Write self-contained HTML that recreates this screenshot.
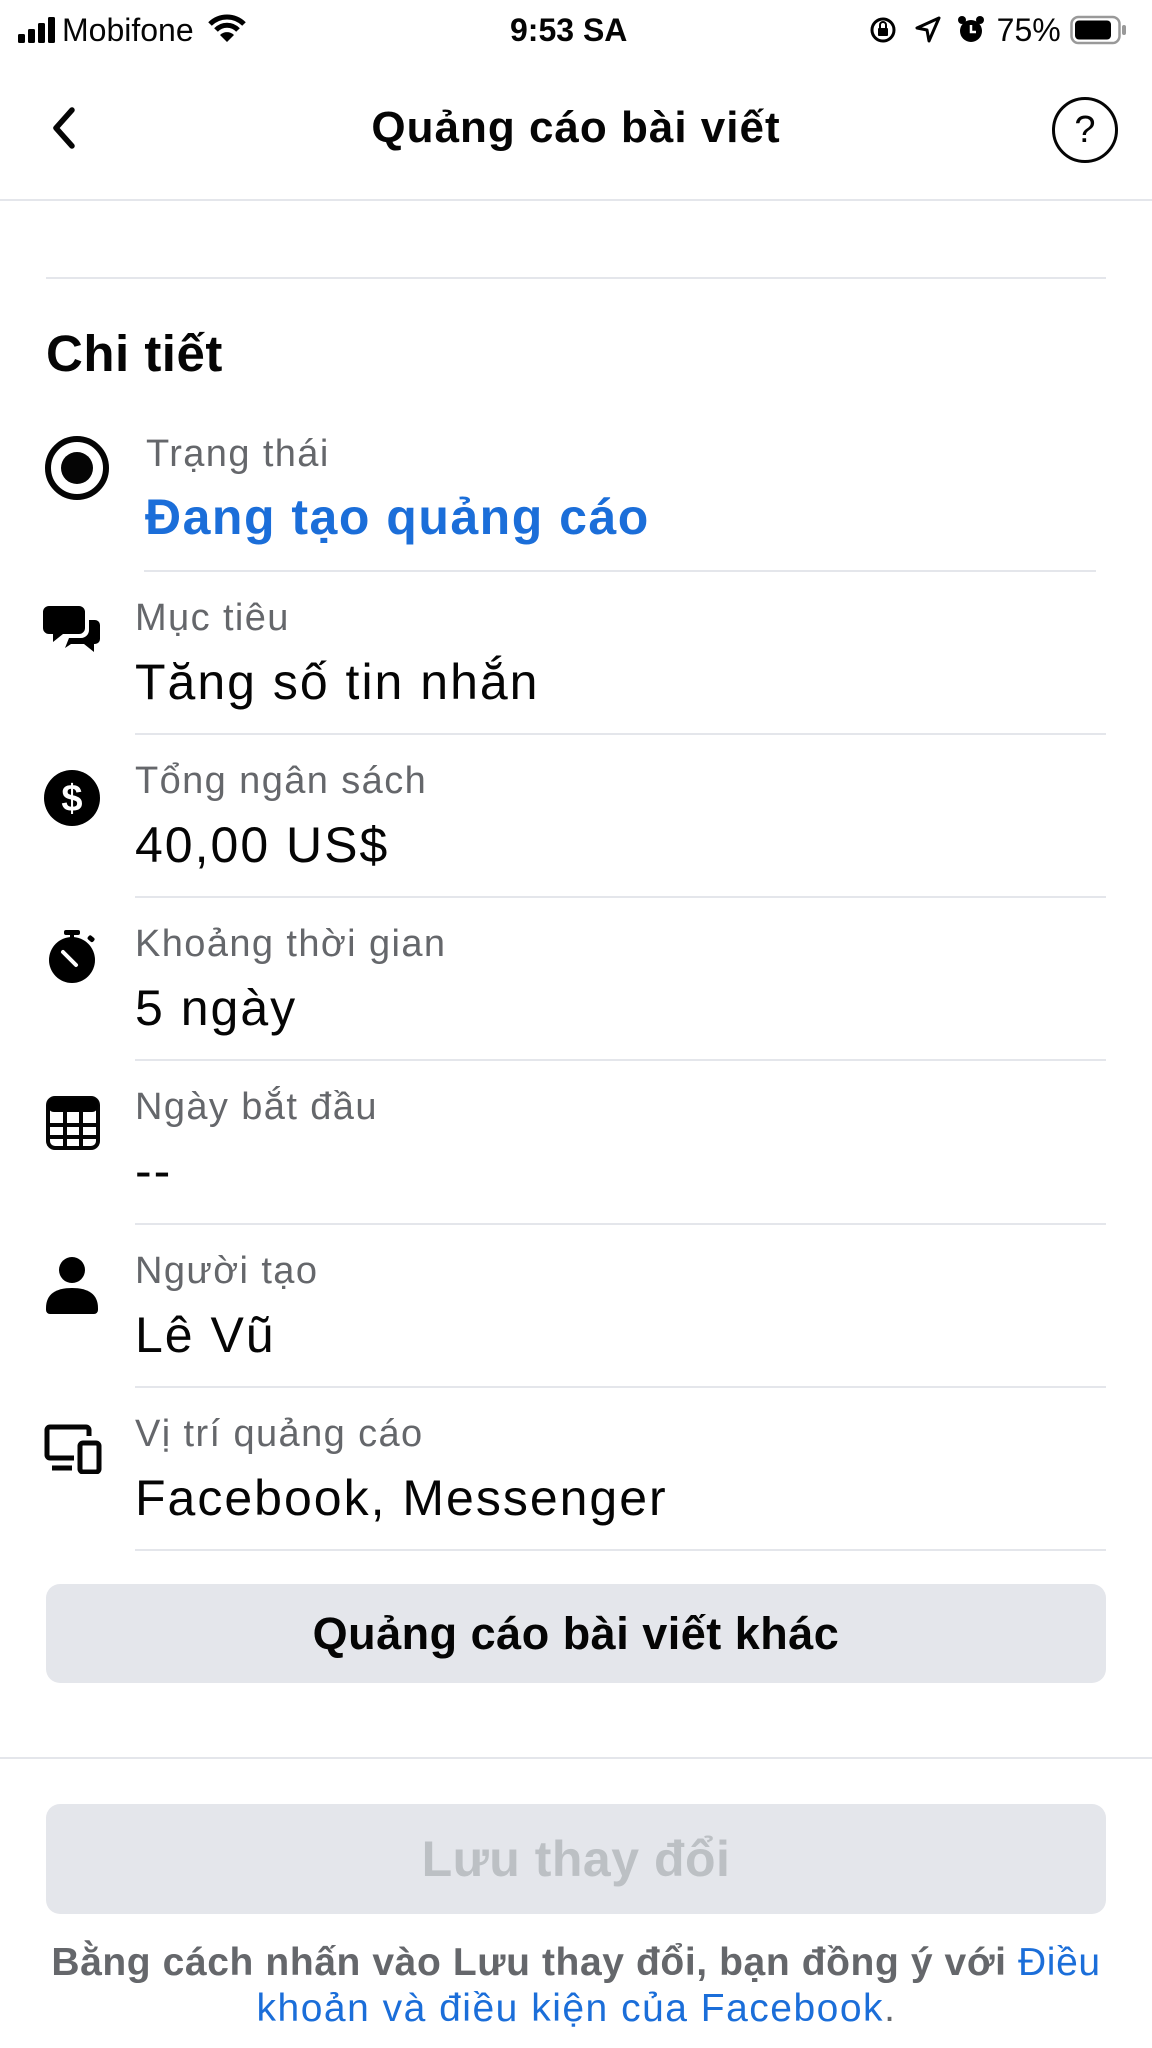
<!DOCTYPE html>
<html><head><meta charset="utf-8">
<style>
*{margin:0;padding:0;box-sizing:border-box}
body{width:1152px;height:2048px;background:#fff;position:relative;overflow:hidden;font-family:"Liberation Sans",sans-serif;color:#050505}
.a{position:absolute;white-space:nowrap}
.lbl{font-size:38px;line-height:40px;color:#65676b;left:135px;letter-spacing:1.4px}
.val{font-size:50px;line-height:52px;color:#050505;left:135px;letter-spacing:2px}
.sep{position:absolute;left:135px;right:46px;height:2px;background:#e4e6eb}
.ic{position:absolute}
</style></head><body>
<!-- status bar -->
<div class="a" style="left:18px;top:12px;font-size:32px;line-height:36px">
<svg width="50" height="26" style="vertical-align:-2px"><rect x="0" y="17" width="7" height="9" rx="1.5"/><rect x="10" y="12" width="7" height="14" rx="1.5"/><rect x="20" y="6" width="7" height="20" rx="1.5"/><rect x="30" y="0" width="7" height="26" rx="1.5"/></svg><span style="margin-left:-6px">Mobifone</span>
<svg width="40" height="30" viewBox="0 0 40 30" style="vertical-align:-3px;margin-left:4px"><path d="M3 10 A24 24 0 0 1 37 10" stroke="#000" stroke-width="5" fill="none"/><path d="M9 16 A15 15 0 0 1 31 16" stroke="#000" stroke-width="5" fill="none"/><path d="M20 28 L13 21 A10 10 0 0 1 27 21 Z"/></svg>
</div>
<div class="a" style="left:510px;top:12px;font-size:32px;line-height:36px;font-weight:bold">9:53 SA</div>
<div class="a" style="left:868px;top:12px;font-size:32px;line-height:36px">
<svg width="30" height="30" viewBox="0 0 30 30" style="vertical-align:-4px"><circle cx="15" cy="15" r="11" stroke="#000" stroke-width="3" fill="none"/><rect x="10" y="13" width="10" height="8" rx="1"/><path d="M12 13v-3a3 3 0 0 1 6 0v3" stroke="#000" stroke-width="2" fill="none"/></svg>
<svg width="30" height="30" viewBox="0 0 30 30" style="vertical-align:-4px;margin-left:6px"><path d="M26 3 L4 13 L14 15 L16 26 Z" stroke="#000" stroke-width="3" fill="none" stroke-linejoin="round"/></svg>
<svg width="30" height="30" viewBox="0 0 30 30" style="vertical-align:-4px;margin-left:4px"><circle cx="15" cy="16" r="11"/><circle cx="6" cy="5" r="4"/><circle cx="24" cy="5" r="4"/><path d="M15 10v7h5" stroke="#fff" stroke-width="2.5" fill="none"/></svg>
<span style="margin-left:2px">75%</span>
<svg width="58" height="32" viewBox="0 0 58 32" style="vertical-align:-5px"><rect x="1.5" y="3" width="48" height="26" rx="7" stroke="#999" stroke-width="2.5" fill="none"/><rect x="5" y="6.5" width="36" height="19" rx="4"/><rect x="52" y="11" width="4" height="10" rx="2" fill="#999"/></svg>
</div>
<!-- nav -->
<svg class="ic" style="left:48px;top:106px" width="32" height="44" viewBox="0 0 32 44"><path d="M24 4 L8 22 L24 40" stroke="#050505" stroke-width="5.5" fill="none" stroke-linecap="round" stroke-linejoin="round"/></svg>
<div class="a" style="left:0;width:1152px;text-align:center;top:104px;font-size:44px;line-height:48px;font-weight:bold;letter-spacing:1px">Quảng cáo bài viết</div>
<div class="a" style="left:1052px;top:97px;width:66px;height:66px;border:3px solid #050505;border-radius:50%;text-align:center;font-size:38px;line-height:60px">?</div>
<div class="a" style="left:0;right:0;top:199px;height:2px;background:#e4e6eb"></div>
<div class="a" style="left:46px;right:46px;top:277px;height:2px;background:#e4e6eb"></div>
<div class="a" style="left:46px;top:327px;font-size:51px;line-height:54px;font-weight:bold;letter-spacing:0.5px">Chi tiết</div>
<!-- row 1 -->
<svg class="ic" style="left:44px;top:435px" width="66" height="66"><circle cx="33" cy="33" r="29" stroke="#050505" stroke-width="6" fill="none"/><circle cx="33" cy="33" r="16" fill="#050505"/></svg>
<div class="a lbl" style="left:146px;top:434px">Trạng thái</div>
<div class="a" style="left:145px;top:491px;font-size:50px;line-height:52px;font-weight:bold;color:#1b6ed9;letter-spacing:1.5px">Đang tạo quảng cáo</div>
<div class="sep" style="top:570px;left:144px;right:56px"></div>
<!-- row 2 -->
<svg class="ic" style="left:43px;top:604px" width="58" height="56" viewBox="0 0 58 56"><path d="M6 2h30a6 6 0 0 1 6 6v16a6 6 0 0 1-6 6H20l-10 8v-8H6a6 6 0 0 1-6-6V8a6 6 0 0 1 6-6z"/><path d="M46 16h6a5 5 0 0 1 5 5v14a5 5 0 0 1-5 5h-1v8l-10-8H28l-6 4 4-10h12a8 8 0 0 0 8-8z"/></svg>
<div class="a lbl" style="top:598px">Mục tiêu</div>
<div class="a val" style="top:656px">Tăng số tin nhắn</div>
<div class="sep" style="top:733px"></div>
<!-- row 3 -->
<svg class="ic" style="left:44px;top:770px" width="56" height="56" viewBox="0 0 56 56"><circle cx="28" cy="28" r="28"/><text x="28" y="41" text-anchor="middle" font-family="Liberation Sans" font-weight="bold" font-size="38" fill="#fff">$</text></svg>
<div class="a lbl" style="top:761px">Tổng ngân sách</div>
<div class="a val" style="top:819px">40,00 US$</div>
<div class="sep" style="top:896px"></div>
<!-- row 4 -->
<svg class="ic" style="left:46px;top:928px" width="54" height="56" viewBox="0 0 54 56"><circle cx="26" cy="32" r="23"/><rect x="18" y="2" width="16" height="5" rx="2"/><rect x="24" y="5" width="4" height="6"/><rect x="42" y="8" width="7" height="5" rx="2" transform="rotate(40 45 10)"/><path d="M17 24 L30 37" stroke="#fff" stroke-width="4" stroke-linecap="round"/></svg>
<div class="a lbl" style="top:924px">Khoảng thời gian</div>
<div class="a val" style="top:982px">5 ngày</div>
<div class="sep" style="top:1059px"></div>
<!-- row 5 -->
<svg class="ic" style="left:46px;top:1096px" width="54" height="54" viewBox="0 0 54 54"><rect x="2" y="2" width="50" height="50" rx="7" stroke="#050505" stroke-width="4" fill="none"/><rect x="2" y="2" width="50" height="14" rx="6"/><path d="M2 29h50M2 41h50M19 14v38M35 14v38" stroke="#050505" stroke-width="4"/></svg>
<div class="a lbl" style="top:1087px">Ngày bắt đầu</div>
<div class="a val" style="top:1145px">--</div>
<div class="sep" style="top:1223px"></div>
<!-- row 6 -->
<svg class="ic" style="left:46px;top:1256px" width="52" height="58" viewBox="0 0 52 58"><circle cx="26" cy="14" r="13"/><path d="M0 52c0-14 10-20 26-20s26 6 26 20v2a4 4 0 0 1-4 4H4a4 4 0 0 1-4-4z"/></svg>
<div class="a lbl" style="top:1251px">Người tạo</div>
<div class="a val" style="top:1309px">Lê Vũ</div>
<div class="sep" style="top:1386px"></div>
<!-- row 7 -->
<svg class="ic" style="left:44px;top:1424px" width="58" height="50" viewBox="0 0 58 50"><path d="M30 34H6a3 3 0 0 1-3-3V6a3 3 0 0 1 3-3h36a3 3 0 0 1 3 3v6" stroke="#050505" stroke-width="5" fill="none"/><path d="M8 44h20" stroke="#050505" stroke-width="5"/><rect x="36" y="19" width="19" height="29" rx="3" stroke="#050505" stroke-width="5" fill="none"/></svg>
<div class="a lbl" style="top:1414px">Vị trí quảng cáo</div>
<div class="a val" style="top:1472px">Facebook, Messenger</div>
<div class="sep" style="top:1549px"></div>
<!-- buttons -->
<div class="a" style="left:46px;width:1060px;top:1584px;height:99px;background:#e4e6eb;border-radius:14px;text-align:center;font-size:45px;line-height:99px;font-weight:bold;letter-spacing:0.5px">Quảng cáo bài viết khác</div>
<div class="a" style="left:0;right:0;top:1757px;height:2px;background:#e4e6eb"></div>
<div class="a" style="left:46px;width:1060px;top:1804px;height:110px;background:#e4e6eb;border-radius:14px;text-align:center;font-size:50px;line-height:110px;font-weight:bold;color:#bcc0c4;letter-spacing:0.5px">Lưu thay đổi</div>
<div class="a" style="left:0;width:1152px;top:1940px;text-align:center;font-size:39px;line-height:46px;color:#65676b;font-weight:bold;letter-spacing:0.6px">Bằng cách nhấn vào Lưu thay đổi, bạn đồng ý với <span style="color:#1b6ed9;font-weight:normal">Điều</span><br><span style="color:#1b6ed9;font-weight:normal;letter-spacing:1.5px">khoản và điều kiện của Facebook</span><span style="font-weight:normal">.</span></div>
</body></html>
